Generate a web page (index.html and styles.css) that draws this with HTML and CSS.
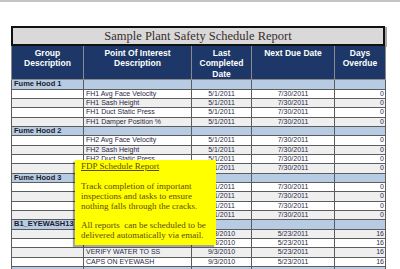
FILE: index.html
```html
<!DOCTYPE html>
<html lang="en">
  <head>
    <meta charset="UTF-8" />
    <title>Sample Plant Safety Schedule Report</title>
    <link rel="stylesheet" href="styles.css">
  </head>
  <body>
    <div class="frame">
      <div class="report">
        <div class="report-title">Sample Plant Safety Schedule Report</div>
        <table class="schedule">
          <colgroup>
            <col class="col-group">
            <col class="col-poi">
            <col class="col-last">
            <col class="col-next">
            <col class="col-days">
          </colgroup>
          <thead>
            <tr>
              <th>Group<br>Description</th>
              <th>Point Of Interest<br>Description</th>
              <th>Last<br>Completed<br>Date</th>
              <th>Next Due Date</th>
              <th>Days<br>Overdue</th>
            </tr>
          </thead>
          <tbody>
            <tr class="group"><td>Fume Hood 1</td><td></td><td></td><td></td><td></td></tr>
            <tr><td></td><td>FH1 Avg Face Velocity</td><td class="date">5/1/2011</td><td class="date">7/30/2011</td><td class="num">0</td></tr>
            <tr class="alt"><td></td><td>FH1 Sash Height</td><td class="date">5/1/2011</td><td class="date">7/30/2011</td><td class="num">0</td></tr>
            <tr><td></td><td>FH1 Duct Static Press</td><td class="date">5/1/2011</td><td class="date">7/30/2011</td><td class="num">0</td></tr>
            <tr class="alt"><td></td><td>FH1 Damper Position %</td><td class="date">5/1/2011</td><td class="date">7/30/2011</td><td class="num">0</td></tr>

            <tr class="group"><td>Fume Hood 2</td><td></td><td></td><td></td><td></td></tr>
            <tr><td></td><td>FH2 Avg Face Velocity</td><td class="date">5/1/2011</td><td class="date">7/30/2011</td><td class="num">0</td></tr>
            <tr class="alt"><td></td><td>FH2 Sash Height</td><td class="date">5/1/2011</td><td class="date">7/30/2011</td><td class="num">0</td></tr>
            <tr><td></td><td>FH2 Duct Static Press</td><td class="date">5/1/2011</td><td class="date">7/30/2011</td><td class="num">0</td></tr>
            <tr class="alt"><td></td><td>FH2 Damper Position %</td><td class="date">5/1/2011</td><td class="date">7/30/2011</td><td class="num">0</td></tr>

            <tr class="group"><td>Fume Hood 3</td><td></td><td></td><td></td><td></td></tr>
            <tr><td></td><td>FH3 Avg Face Velocity</td><td class="date">5/1/2011</td><td class="date">7/30/2011</td><td class="num">0</td></tr>
            <tr class="alt"><td></td><td>FH3 Sash Height</td><td class="date">5/1/2011</td><td class="date">7/30/2011</td><td class="num">0</td></tr>
            <tr><td></td><td>FH3 Duct Static Press</td><td class="date">5/1/2011</td><td class="date">7/30/2011</td><td class="num">0</td></tr>
            <tr class="alt"><td></td><td>FH3 Damper Position %</td><td class="date">5/1/2011</td><td class="date">7/30/2011</td><td class="num">0</td></tr>

            <tr class="group"><td class="spill">B1_EYEWASH13</td><td></td><td></td><td></td><td></td></tr>
            <tr class="alt"><td></td><td>FLUSH EYEWASH</td><td class="date">9/3/2010</td><td class="date">5/23/2011</td><td class="num">16</td></tr>
            <tr><td></td><td>CHECK SIGNAGE</td><td class="date">9/3/2010</td><td class="date">5/23/2011</td><td class="num">16</td></tr>
            <tr class="alt"><td></td><td>VERIFY WATER TO SS</td><td class="date">9/3/2010</td><td class="date">5/23/2011</td><td class="num">16</td></tr>
            <tr><td></td><td>CAPS ON EYEWASH</td><td class="date">9/3/2010</td><td class="date">5/23/2011</td><td class="num">16</td></tr>

            <tr class="group"><td></td><td></td><td></td><td></td><td></td></tr>
          </tbody>
        </table>

        <!-- hover note shown over the table -->
        <div class="note">
          <a class="note-link">FDP Schedule Report</a>
          <p>Track completion of important inspections and tasks to ensure nothing falls through the cracks.</p>
          <p>All reports &nbsp;can be scheduled to be delivered automatically via email.</p>
        </div>
      </div>
    </div>
  </body>
</html>
```

FILE: styles.css
```css
body {
  margin: 0;
  padding: 0;
  background-color: #ffffff;
  font-family: "Liberation Sans", Arial, sans-serif;
}
.frame {
  border-top: 2px solid #c4c4c4;
  height: 267px;
  overflow: hidden;
}
.report {
  position: relative;
  width: 374px;
  margin: 24px 0 0 11px;
}
.report-title {
  box-sizing: border-box;
  height: 20px;
  border: 2px solid #111111;
  background-color: #d9d9d9;
  box-shadow: 2px 1px 0 #a8a8a8;
  color: #3b2c2c;
  font-family: "Liberation Serif", "Times New Roman", serif;
  font-size: 12.5px;
  line-height: 16px;
  text-align: center;
}
.schedule {
  width: 374px;
  table-layout: fixed;
  border-collapse: collapse;
}
.col-group { width: 72px; }
.col-poi { width: 108px; }
.col-last { width: 60px; }
.col-next { width: 83px; }
.col-days { width: 51px; }

.schedule th {
  height: 31px;
  padding: 2px 1px 0;
  background-color: #1d3768;
  border: 1px solid #8a8a8a;
  border-top: none;
  color: #ffffff;
  font-size: 8.5px;
  font-weight: bold;
  line-height: 10.4px;
  text-align: center;
  vertical-align: top;
}
.schedule td {
  padding: 0 2px;
  height: 8.35px;
  border: 1px solid #5c5c5c;
  background-color: #ffffff;
  color: #2a2a48;
  font-size: 7px;
  line-height: 8.35px;
  white-space: nowrap;
  overflow: hidden;
}
.schedule tr.alt td {
  background-color: #efefef;
}
.schedule tr.group td {
  background-color: #b7cbe3;
  color: #1c1c2c;
  font-size: 7.5px;
  font-weight: bold;
}
.schedule td.spill {
  overflow: visible;
}
.schedule td.date {
  text-align: center;
}
.schedule td.num {
  text-align: right;
  padding-right: 1px;
}

.note {
  position: absolute;
  left: 64px;
  top: 134px;
  box-sizing: border-box;
  width: 141px;
  height: 85px;
  padding: 2px 4px 0 6px;
  background-color: #ffff00;
  box-shadow: -2px 2px 1px rgba(0, 0, 0, 0.35);
  color: #5a4a14;
  font-family: "Liberation Serif", "Times New Roman", serif;
  font-size: 9px;
  line-height: 9.9px;
}
.note-link {
  text-decoration: underline;
}
.note p {
  margin: 9.9px 0 0;
}
```
